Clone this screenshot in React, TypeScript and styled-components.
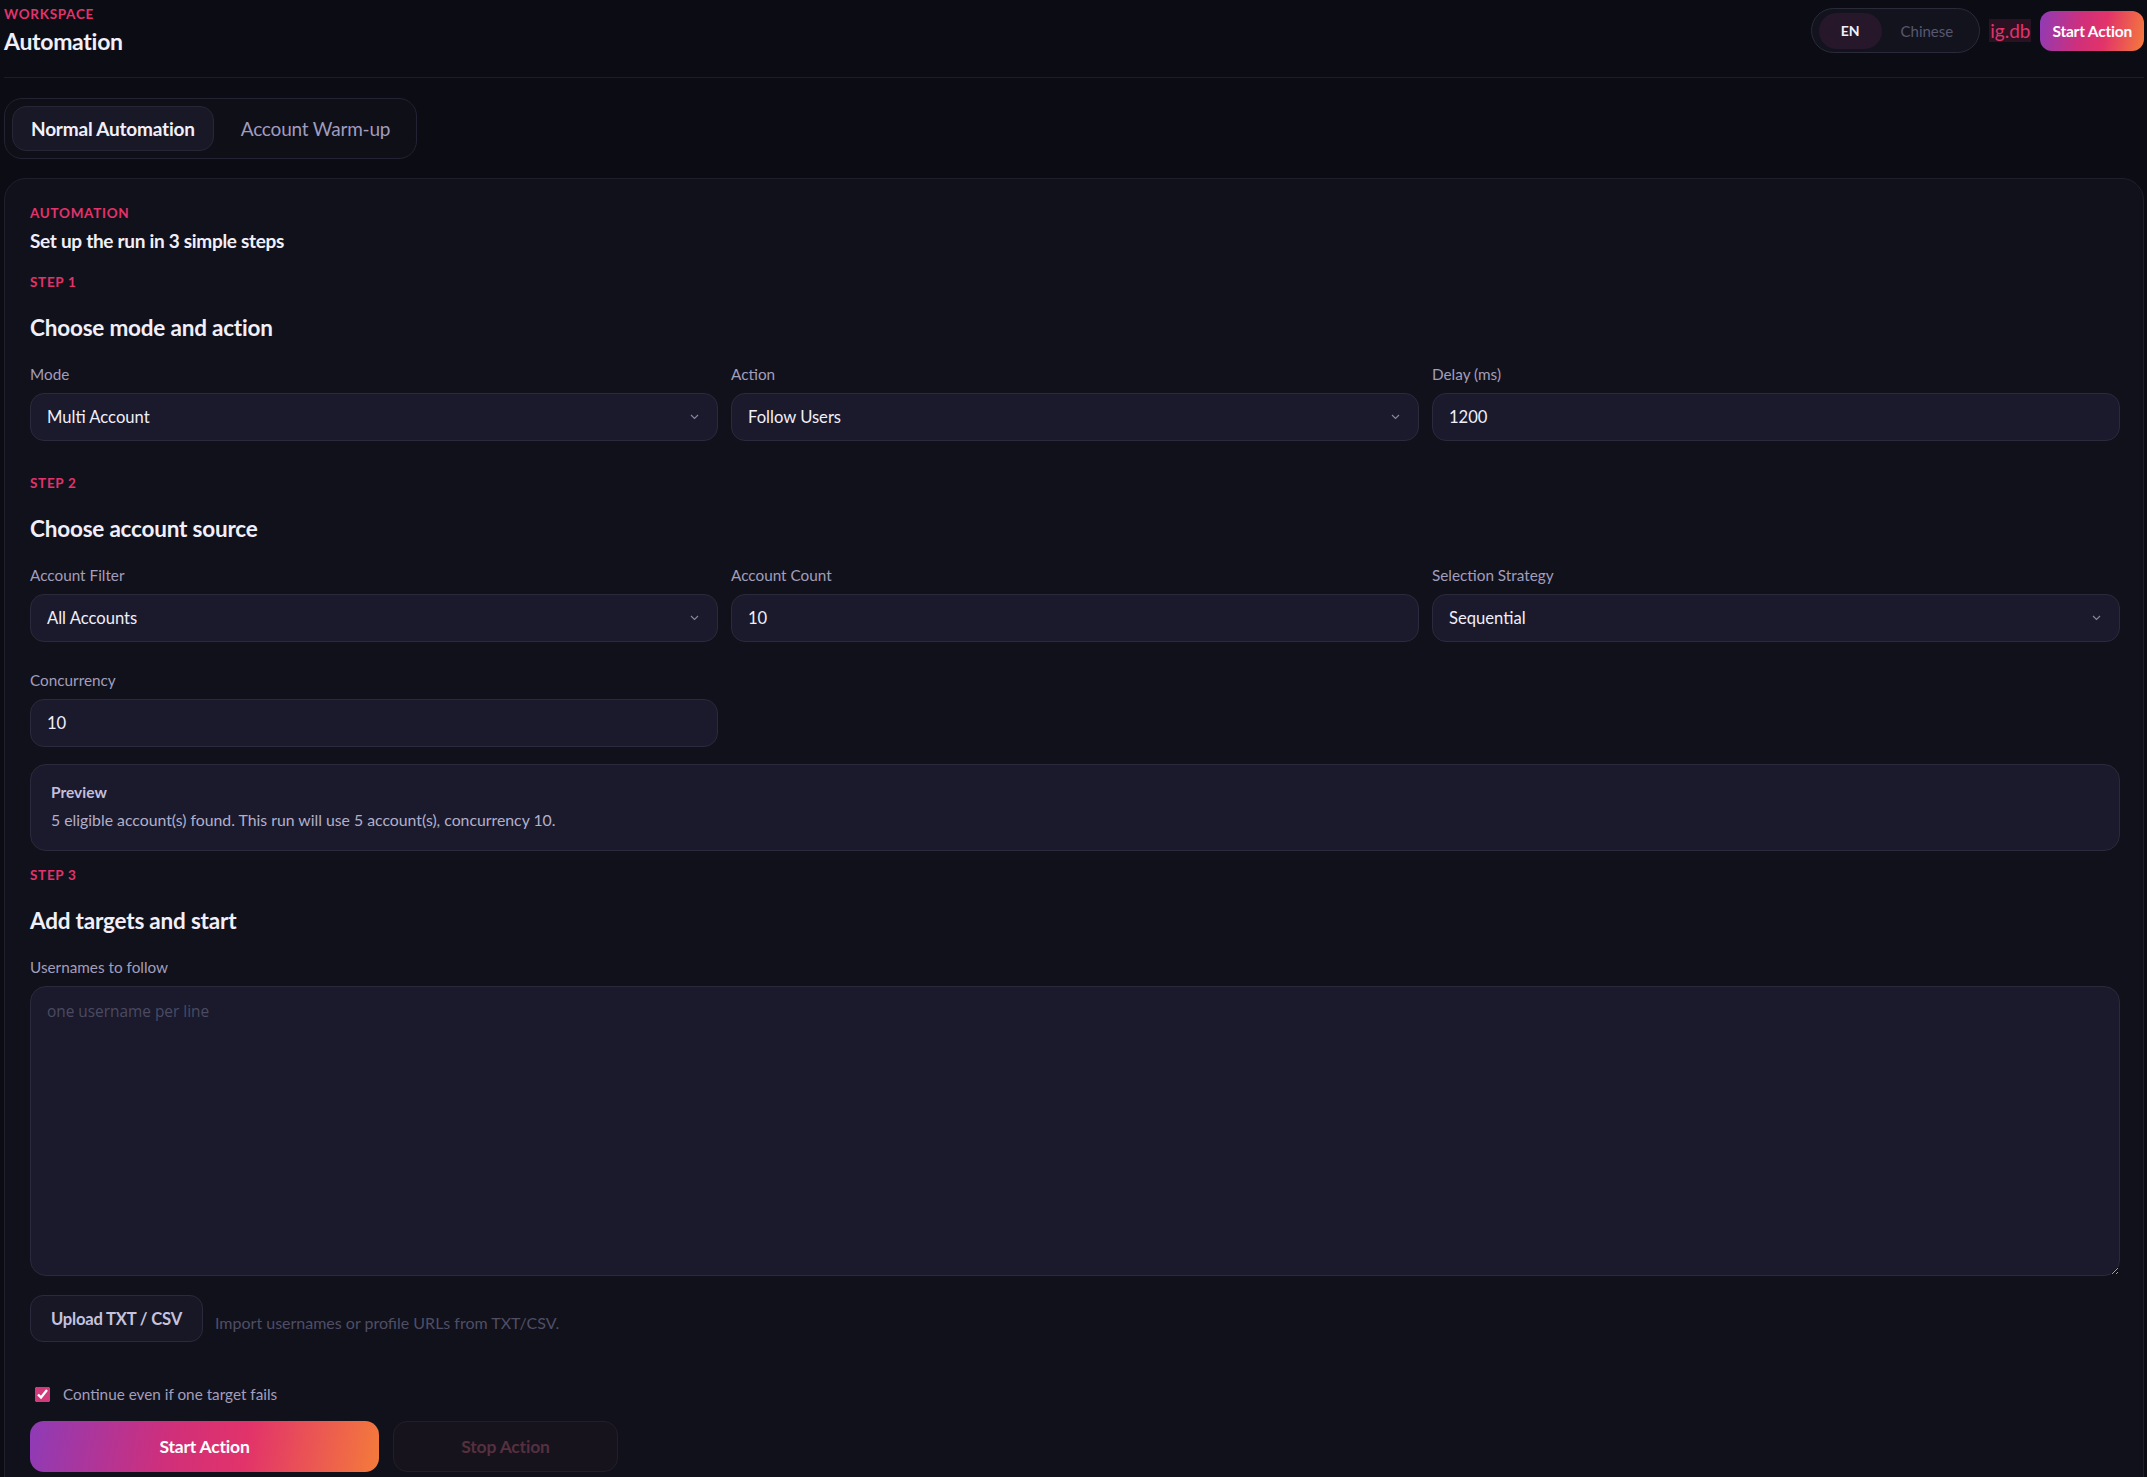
import styled, { createGlobalStyle } from "styled-components";

const GlobalStyle = createGlobalStyle`
  * { box-sizing: border-box; }
  body {
    margin: 0;
    background: #0c0c14;
    color: #f1eff9;
    font-family: Lato, "Noto Sans", sans-serif;
  }
`;

const Page = styled.div`
  padding: 0 3px 0 4px;
  min-height: 100vh;
`;

const Header = styled.header`
  height: 78px;
  display: flex;
  justify-content: space-between;
  align-items: flex-start;
  border-bottom: 1px solid #1d1d29;
`;

const TitleBlock = styled.div`
  padding-top: 6px;
  display: flex;
  flex-direction: column;
`;

const Eyebrow = styled.span`
  font-size: 13.5px;
  font-weight: 700;
  letter-spacing: 0.7px;
  color: #e2336c;
  text-transform: uppercase;
  line-height: 17px;
`;

const PageTitle = styled.h1`
  margin: 4px 0 0;
  font-size: 23px;
  line-height: 28px;
  font-weight: 700;
  letter-spacing: -0.3px;
`;

const HeaderRight = styled.div`
  display: flex;
  align-items: center;
  gap: 9px;
  padding-top: 8px;
`;

const LangToggle = styled.div`
  display: flex;
  align-items: center;
  height: 45px;
  padding: 4px 7px;
  border-radius: 999px;
  background: #13131e;
  border: 1px solid #2a2a3b;
`;

const LangOption = styled.button<{ $active?: boolean }>`
  border: none;
  height: 36px;
  border-radius: 999px;
  padding: 0 ${(p) => (p.$active ? "22px" : "19px")};
  font-family: inherit;
  font-size: ${(p) => (p.$active ? "14px" : "15px")};
  font-weight: ${(p) => (p.$active ? 700 : 400)};
  color: ${(p) => (p.$active ? "#f1eff9" : "#575770")};
  background: ${(p) => (p.$active ? "#26172a" : "transparent")};
  cursor: pointer;
`;

const Brand = styled.span`
  font-size: 19px;
  color: #e2336c;
  background: #2a1222;
  padding: 0 1px;
  line-height: 23px;
`;

const GradientButton = styled.button<{ $big?: boolean }>`
  border: none;
  cursor: pointer;
  color: #fff;
  font-family: inherit;
  font-weight: 700;
  font-size: ${(p) => (p.$big ? "17.5px" : "15.5px")};
  height: ${(p) => (p.$big ? "51px" : "40px")};
  width: ${(p) => (p.$big ? "349px" : "auto")};
  padding: 0 ${(p) => (p.$big ? "0" : "12px")};
  border-radius: ${(p) => (p.$big ? "14px" : "12px")};
  background: linear-gradient(100deg, #8e3bb7 0%, #d02f7a 40%, #e2336a 62%, #f47b3b 100%);
  letter-spacing: -0.2px;
`;

const Tabs = styled.div`
  display: inline-flex;
  align-items: center;
  gap: 8px;
  margin-top: 20px;
  padding: 7px;
  border-radius: 18px;
  border: 1px solid #232333;
  background: #0f0f18;
`;

const Tab = styled.button<{ $active?: boolean }>`
  height: 45px;
  padding: 0 18px;
  border-radius: 14px;
  font-family: inherit;
  font-size: 19px;
  font-weight: ${(p) => (p.$active ? 700 : 400)};
  color: ${(p) => (p.$active ? "#f1eff9" : "#a09cbf")};
  background: ${(p) => (p.$active ? "#181826" : "transparent")};
  border: 1px solid ${(p) => (p.$active ? "#262636" : "transparent")};
  letter-spacing: -0.2px;
  cursor: pointer;
`;

const Card = styled.section`
  margin-top: 19px;
  padding: 26px 23px 40px 25px;
  border-radius: 22px;
  border: 1px solid #20202d;
  background: #11111b;
  display: flex;
  flex-direction: column;
`;

const Kicker = styled.div<{ $gap?: number }>`
  margin-top: ${(p) => p.$gap ?? 0}px;
  font-size: 13.5px;
  line-height: 17px;
  font-weight: 700;
  letter-spacing: 0.7px;
  color: #e2336c;
  text-transform: uppercase;
`;

const Lead = styled.div`
  margin-top: 7px;
  font-size: 19px;
  line-height: 24px;
  font-weight: 700;
  letter-spacing: -0.3px;
`;

const StepTitle = styled.h2`
  margin: 23px 0 0;
  font-size: 22.5px;
  line-height: 28px;
  font-weight: 700;
  letter-spacing: -0.2px;
`;

const Grid = styled.div<{ $cols?: number }>`
  margin-top: 22px;
  display: grid;
  grid-template-columns: repeat(${(p) => p.$cols ?? 3}, 1fr);
  column-gap: 13px;
  row-gap: 28px;
`;

const Field = styled.div`
  display: flex;
  flex-direction: column;
  gap: 9px;
`;

const Label = styled.label`
  font-size: 15.3px;
  line-height: 20px;
  color: #a29ebd;
`;

const Control = styled.div`
  height: 48px;
  display: flex;
  align-items: center;
  justify-content: space-between;
  padding: 0 18px 0 16px;
  border-radius: 14px;
  border: 1px solid #2a2a3c;
  background: #1a1a2c;
  font-size: 16.6px;
  color: #f1eff9;
`;

const Chevron = () => (
  <svg width="9" height="6" viewBox="0 0 9 6" fill="none">
    <path d="M1 1l3.5 3.5L8 1" stroke="#8a87a2" strokeWidth="1.1" />
  </svg>
);

const Preview = styled.div`
  margin-top: 17px;
  padding: 16px 20px 20px;
  border-radius: 16px;
  border: 1px solid #2a2a3c;
  background: #1a1a2c;
`;

const PreviewTitle = styled.div`
  font-size: 15.5px;
  line-height: 22px;
  font-weight: 700;
  color: #c3bfdb;
`;

const PreviewText = styled.div`
  margin-top: 7px;
  font-size: 15.8px;
  line-height: 20px;
  color: #b3afcb;
`;

const TextArea = styled.textarea`
  height: 290px;
  width: 100%;
  resize: vertical;
  padding: 14px 16px;
  border-radius: 16px;
  border: 1px solid #2a2a3c;
  background: #1a1a2c;
  font-family: "Open Sans", sans-serif;
  font-size: 15.4px;
  color: #f1eff9;
  outline: none;
  &::placeholder {
    color: #4b4a62;
  }
`;

const UploadRow = styled.div`
  margin-top: 19px;
  display: flex;
  align-items: center;
  gap: 12px;
`;

const UploadButton = styled.button`
  height: 47px;
  padding: 0 20px;
  border-radius: 13px;
  border: 1px solid #2a2a3c;
  background: #171725;
  font-family: inherit;
  font-size: 16.6px;
  font-weight: 700;
  color: #c6c2de;
  letter-spacing: -0.2px;
  cursor: pointer;
`;

const Hint = styled.span`
  margin-top: 8px;
  font-size: 16px;
  color: #4f4e66;
`;

const CheckRow = styled.label`
  margin-top: 43px;
  display: flex;
  align-items: center;
  gap: 13px;
  padding-left: 5px;
  font-size: 15.3px;
  color: #a29ebd;
  input {
    width: 15px;
    height: 15px;
    margin: 0;
    accent-color: #d23a7c;
  }
`;

const Actions = styled.div`
  margin-top: 18px;
  display: flex;
  gap: 14px;
`;

const StopButton = styled.button`
  width: 225px;
  height: 51px;
  border-radius: 14px;
  border: 1px solid #241d2a;
  background: #17131c;
  font-family: inherit;
  font-size: 17.5px;
  font-weight: 700;
  color: #55303f;
  letter-spacing: -0.2px;
`;

export default function App() {
  return (
    <>
      <GlobalStyle />
      <Page>
        <Header>
          <TitleBlock>
            <Eyebrow>Workspace</Eyebrow>
            <PageTitle>Automation</PageTitle>
          </TitleBlock>
          <HeaderRight>
            <LangToggle>
              <LangOption $active>EN</LangOption>
              <LangOption>Chinese</LangOption>
            </LangToggle>
            <Brand>ig.db</Brand>
            <GradientButton>Start Action</GradientButton>
          </HeaderRight>
        </Header>

        <Tabs>
          <Tab $active>Normal Automation</Tab>
          <Tab>Account Warm-up</Tab>
        </Tabs>

        <Card>
          <Kicker>Automation</Kicker>
          <Lead>Set up the run in 3 simple steps</Lead>

          <Kicker $gap={21}>Step 1</Kicker>
          <StepTitle>Choose mode and action</StepTitle>
          <Grid>
            <Field>
              <Label>Mode</Label>
              <Control>
                Multi Account
                <Chevron />
              </Control>
            </Field>
            <Field>
              <Label>Action</Label>
              <Control>
                Follow Users
                <Chevron />
              </Control>
            </Field>
            <Field>
              <Label>Delay (ms)</Label>
              <Control>1200</Control>
            </Field>
          </Grid>

          <Kicker $gap={34}>Step 2</Kicker>
          <StepTitle>Choose account source</StepTitle>
          <Grid>
            <Field>
              <Label>Account Filter</Label>
              <Control>
                All Accounts
                <Chevron />
              </Control>
            </Field>
            <Field>
              <Label>Account Count</Label>
              <Control>10</Control>
            </Field>
            <Field>
              <Label>Selection Strategy</Label>
              <Control>
                Sequential
                <Chevron />
              </Control>
            </Field>
            <Field>
              <Label>Concurrency</Label>
              <Control>10</Control>
            </Field>
          </Grid>

          <Preview>
            <PreviewTitle>Preview</PreviewTitle>
            <PreviewText>
              5 eligible account(s) found. This run will use 5 account(s), concurrency 10.
            </PreviewText>
          </Preview>

          <Kicker $gap={16}>Step 3</Kicker>
          <StepTitle>Add targets and start</StepTitle>
          <Grid $cols={1}>
            <Field>
              <Label>Usernames to follow</Label>
              <TextArea placeholder="one username per line" />
            </Field>
          </Grid>

          <UploadRow>
            <UploadButton>Upload TXT / CSV</UploadButton>
            <Hint>Import usernames or profile URLs from TXT/CSV.</Hint>
          </UploadRow>

          <CheckRow>
            <input type="checkbox" defaultChecked />
            Continue even if one target fails
          </CheckRow>

          <Actions>
            <GradientButton $big>Start Action</GradientButton>
            <StopButton disabled>Stop Action</StopButton>
          </Actions>
        </Card>
      </Page>
    </>
  );
}
